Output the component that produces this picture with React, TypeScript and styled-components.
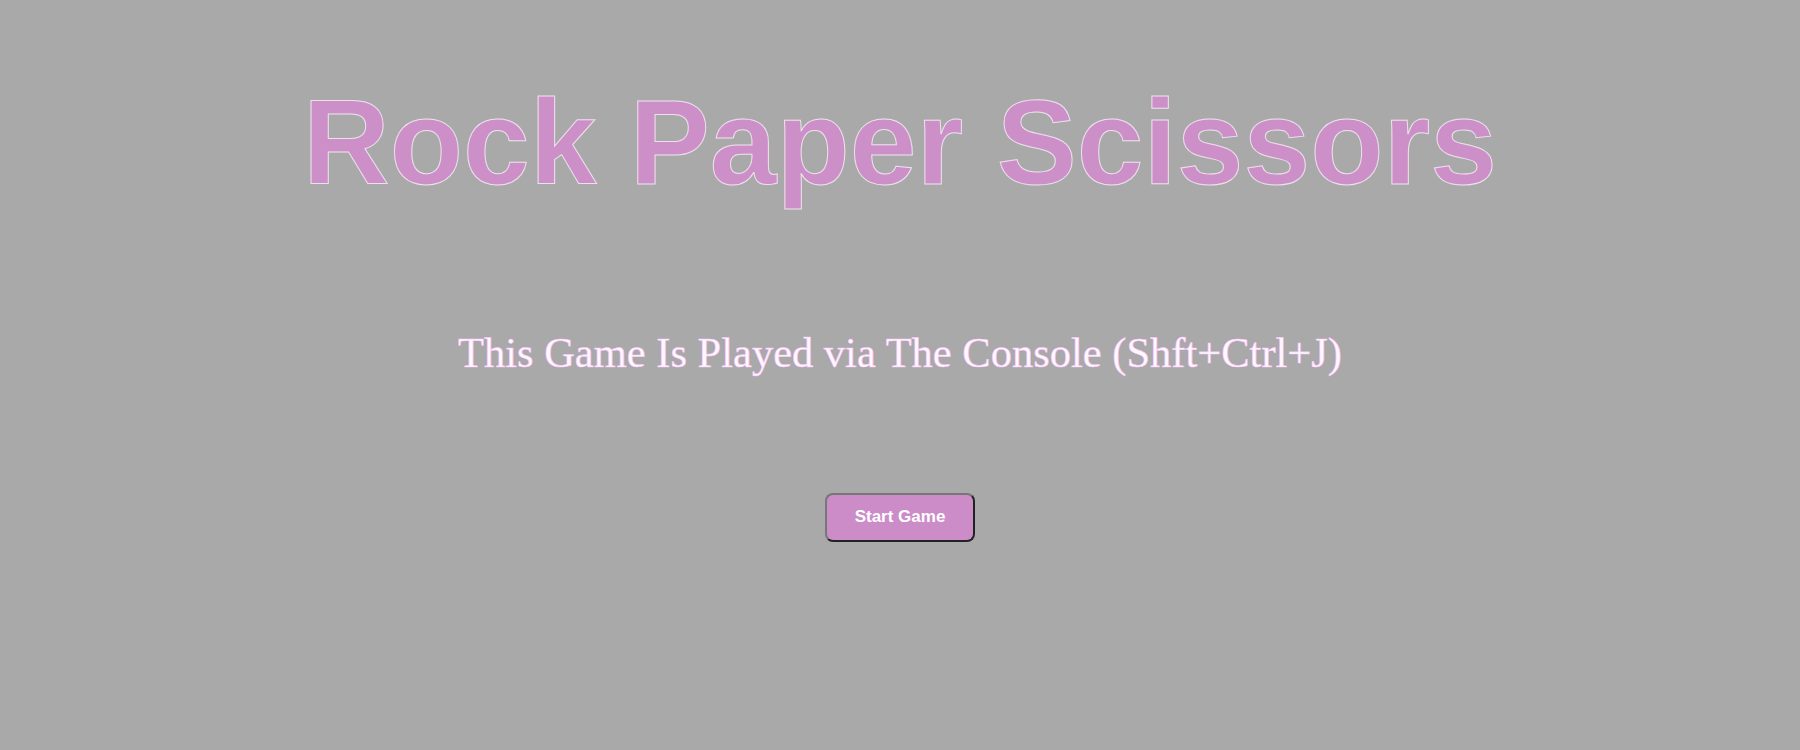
import styled, { createGlobalStyle } from "styled-components";

const GlobalStyle = createGlobalStyle`
  body {
    margin: 0;
    background: darkgray;
    font-family: "Liberation Sans", Arial, sans-serif;
  }
`;

const Page = styled.main`
  display: flex;
  flex-direction: column;
  align-items: center;
  min-height: 750px;
`;

const Title = styled.h1`
  margin: 73px 0 0 0;
  font-family: "Liberation Sans", Arial, sans-serif;
  font-size: 120px;
  font-weight: bold;
  color: #cc8fc8;
  -webkit-text-stroke: 1px #ece0ec;
  line-height: 1.15;
`;

const Subtitle = styled.h2`
  margin: 118px 0 0 0;
  font-family: "Liberation Serif", "Times New Roman", serif;
  font-size: 42.5px;
  font-weight: normal;
  color: #fff8ff;
  -webkit-text-stroke: 0.6px #f4d0f4;
  text-shadow: 0 0 1px #e070e0;
  line-height: 1.15;
`;

const StartButton = styled.button`
  margin-top: 115px;
  width: 150px;
  height: 49px;
  background: #cb8cc7;
  color: #fff;
  font-family: "Liberation Sans", Arial, sans-serif;
  font-size: 17px;
  font-weight: bold;
  border: 2px solid;
  border-color: #777 #222 #222 #777;
  border-radius: 8px;
  cursor: pointer;
`;

const App = () => {
  return (
    <Page>
      <GlobalStyle />
      <Title>Rock Paper Scissors</Title>
      <Subtitle>This Game Is Played via The Console (Shft+Ctrl+J)</Subtitle>
      <StartButton>Start Game</StartButton>
    </Page>
  );
};

export default App;
